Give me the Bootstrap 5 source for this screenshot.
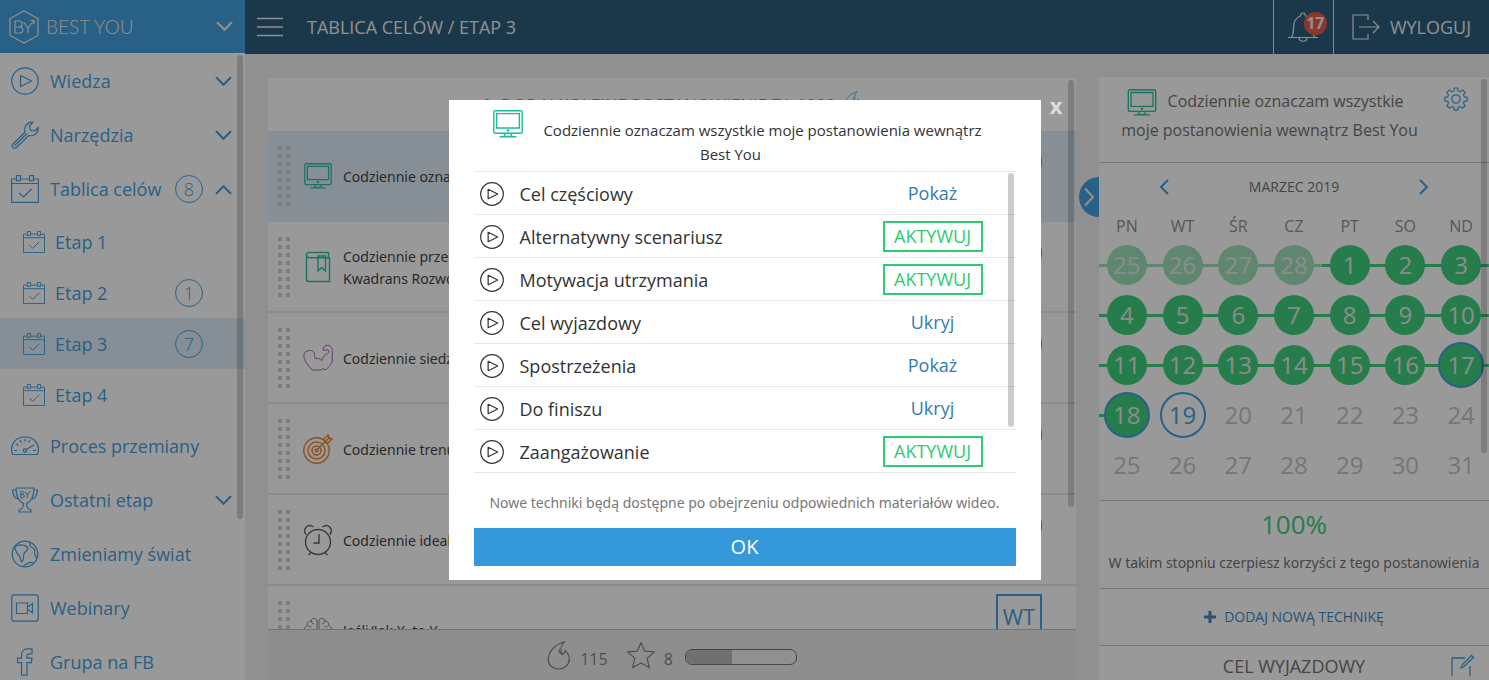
<!DOCTYPE html>
<html lang="pl">
<head>
<meta charset="utf-8">
<meta name="viewport" content="width=device-width, initial-scale=1">
<title>Best You – Tablica celów</title>
<link href="https://cdn.jsdelivr.net/npm/bootstrap@5.3.0/dist/css/bootstrap.min.css" rel="stylesheet">
<style>
:root{--by-blue:#3498db;--by-navy:#1b4f72;--by-green:#2ecc71;--by-sel:#dcedfa;--by-line:#c4c4c4}
body{font-family:"Open Sans","Noto Sans",sans-serif;font-size:14px;line-height:22px;color:#333;background:#eee}
svg{fill:none;stroke:currentColor;flex:none}
button{font-family:inherit}
.app{height:100vh}
.plain{background:none;border:0;padding:0;color:inherit}
.widetext{font-family:"Noto Sans","Open Sans",sans-serif}
.side{width:245px;background:#fff;color:var(--by-blue)}
.brandbar{height:54px;background:var(--by-blue);color:#eee;padding:0 12px 0 9px;gap:7px}
.brandname{font-family:Lato,sans-serif;font-weight:300;font-size:19px}
.menu{padding-top:1px}
.menu a{color:var(--by-blue);height:54px;padding:0 13px 0 11px;font-size:18px;gap:11px}
.menu .sub{margin-bottom:-1px}
.menu .sub a{height:51px;padding-left:23px;gap:10px}
.menu .sub .count{margin-right:2px}
.menu a.current{background:var(--by-sel)}
.count{width:28px;height:28px;border:1px solid;border-radius:50%;line-height:26px;text-align:center;font-weight:300;margin-right:1px}
.slot{width:17px}
.thumbbar{position:absolute;width:6px;border-radius:3px;background:rgba(0,0,0,.2);right:2px;top:2px}
.topbar{height:54px;background:var(--by-navy);color:#eee;font-size:18px}
.topbar .cell{border-left:1px solid #ddd}
.logout{padding:0 18px;gap:10px}
.bell{width:60px}
.redcount{position:absolute;left:30px;top:12px;width:23px;height:23px;border-radius:50%;background:#e74c3c;font-size:16px;line-height:23px;font-weight:700;text-align:center}
.board{margin:24px 23px 0 23px}
.goals{background:#fff}
.goals .addrow{height:53px;color:var(--by-blue);font-size:17px}
.goals .addrow>svg{margin-bottom:3px}
.goal{height:91px;border-bottom:2px solid #e6e6e6;padding:0 34px 0 10px}
.goal.current{background:var(--by-sel);border-color:var(--by-sel)}
.grip{width:12px;height:60px;background:repeating-linear-gradient(#fff0 0 4px,#fff 4px 8px),repeating-linear-gradient(90deg,#ccc 0 4px,#fff 4px 8px)}
.current .grip{background:repeating-linear-gradient(#fff0 0 4px,var(--by-sel) 4px 8px),repeating-linear-gradient(90deg,#ccc 0 4px,var(--by-sel) 4px 8px)}
.gicon{width:30px;margin:0 10px 0 13px}
.gname{padding-top:2px}
.dayball{width:46px;height:46px;margin-top:8px;border-radius:50%;background:var(--by-blue)}
.dayball.box{border-radius:0;background:none;border:2px solid var(--by-blue);color:var(--by-blue);font-size:22px;line-height:40px;text-align:center}
.stats{height:51px;border-top:1px solid #bbb;background:#ebebeb;color:#777;font-size:16px}
.stats span{padding-top:7px}
.stats .points{margin:0 18px 0 9px}
.stats .progress{width:112px;height:16px;margin:4px 0 0 12px;border:1px solid #666;border-radius:7px;background:#eee}
.stats .progress-bar{background:#b5b5b5}
.panel{width:390px;margin-top:23px;background:#fff;color:#666}
.panel section{border-bottom:1px solid var(--by-line)}
.drawer{position:absolute;left:-20px;top:100px;width:20px;height:40px;border-radius:20px 0 0 20px;background:var(--by-blue);color:#eee}
.ptitle{height:86px;font-size:16px;line-height:29px;padding:10px 21px 0 0}
.ptitle div{padding-right:4px}
.ptitle .screen{margin:0 6px 0 -8px}
.month{padding:13px 60px 0}
.cal{table-layout:fixed;width:100%;margin-bottom:10px;text-align:center}
.cal th{font-weight:400;font-size:16px;height:42px;padding-top:14px;color:#888}
.cal td{height:50px;padding:0;font-size:24px;line-height:40px;color:#c0c0c0}
.cal span{display:block;width:40px;height:40px;margin:auto;border-radius:50%}
.cal .done,.cal .old{background:linear-gradient(var(--by-green),var(--by-green)) center/100% 3px no-repeat}
.cal .old{background-image:linear-gradient(#96dfb4,#96dfb4)}
.cal .done span{background:var(--by-green);color:#e8e8e8}
.cal .old span{background:#96dfb4;color:#e8e8e8}
.cal .ring span{width:46px;height:46px;line-height:42px;border:2px solid var(--by-blue)}
.cal .last{background-position:left;background-size:50% 3px}
.cal .today{color:var(--by-blue)}
.score{padding:5px 0 14px}
.score p{margin:10px 0 0}
.pct{font-size:26px;line-height:36px;color:var(--by-green)}
.addtech{padding:17px 0 16px}
.tech{height:30px;overflow:hidden;font-size:18px;line-height:40px;padding:0 14px 0 38px}
.modal-backdrop{background:rgba(28,28,28,.45)}
.modal-dialog{max-width:592px;margin:100px auto 0}
.modal-content{border:0;border-radius:0;padding:0 25px 14px;color:#333}
.mtitle{font-size:15px;line-height:24px;padding:18px 28px 5px 0}
.mtitle svg{margin:-16px 20px 0 14px}
.tlist{border-top:1px solid #e8e8e8}
.tlist li{height:43px;border-bottom:1px solid #e8e8e8;font-size:18px;padding:2px 33px 0 6px}
.tlist a,.tlist button{width:100px;text-align:center;line-height:27px;margin-bottom:2px;color:#337ab7}
.tlist button{border:2px solid var(--by-green);background:#fff;color:var(--by-green);border-radius:0;padding:0}
.mnote{margin:19px 0 14px;color:#777}
.okbtn{background:var(--by-blue);color:#fff;border-radius:0;border:0;height:38px;font-size:20px;line-height:24px}
.xclose{position:absolute;right:-22px;top:-8px;font-size:22px;line-height:26px;font-weight:700;color:#ddd}
</style>
</head>
<body>
<svg class="d-none">
  <symbol id="down" viewBox="0 0 16 10"><path d="M1.500 1.500 8 8l6.500-6.500" stroke-width="2" stroke-linecap="round"/></symbol>
  <symbol id="cal" viewBox="0 0 28 28"><path d="M5.500 4H.6v23.400h26.800V4h-4.900M9.500 4h9M.6 8.500h26.800M8 18l4.500 4 8-8M5.500.6h4v5h-4zM18.500.6h4v5h-4z" stroke-width="1.200"/></symbol>
  <symbol id="play" viewBox="0 0 28 28"><circle cx="14" cy="14" r="13.200"/><path d="M9.500 8.500v11l11.200-5.500z" stroke-linejoin="round"/></symbol>
  <symbol id="mac" viewBox="0 0 30 28"><rect x=".8" y=".8" width="28.400" height="22.400" rx="1.500"/><path d="M3.600 3.600h22.800v14.400H3.600zM12 23.400l-.8 3h7.600l-.8-3M6.500 26.800h17" /><circle cx="15" cy="20.500" r=".6"/></symbol>
  <symbol id="flame" viewBox="0 0 24 29"><path d="M17 1C8 3 1.500 11 1.200 18c-.2 6 4.800 10 10.300 10 6 0 10.800-4 10.800-10 0-4-1.600-6.300-4.300-8.300 0 1.500-.8 2.800-2.500 3.800C13 9.500 13.500 4.500 17 1zM12.300 8c-.5 2.200.6 4.300 3.200 5.500"/></symbol>
</svg>

<div class="app d-flex overflow-hidden">
  <nav class="side flex-shrink-0 d-flex flex-column">
    <div class="brandbar d-flex align-items-center">
      <svg width="30" height="34" viewBox="0 0 30 34" stroke-width="1.200"><path d="M15 1l14 7.500v17L15 33 1 25.500v-17zM6 11v12h4.500c4.500 0 4.500-6 0-6H6m0-6h4c4 0 4 6 0 6M14.500 12l4.500 6m0 5v-5l6-7.500M21 10.500h4v4"/></svg>
      <span class="brandname me-auto">BEST YOU</span>
      <button class="plain d-flex" aria-label="Konto"><svg width="17" height="11"><use href="#down"/></svg></button>
    </div>
    <div class="menu position-relative flex-grow-1 overflow-hidden">
      <a href="#" class="d-flex align-items-center text-decoration-none"><svg width="28" height="28" stroke-width="1.200"><use href="#play"/></svg><span class="me-auto">Wiedza</span><svg width="17" height="11"><use href="#down"/></svg></a>
      <a href="#" class="d-flex align-items-center text-decoration-none"><svg width="28" height="28" viewBox="0 0 28 28" stroke-width="1.200" stroke-linejoin="round"><path d="M1.500 23.500 14 11.200C12.500 6 16 .8 22 1.200L18.500 5l.8 4.200 4.400.8 3.600-3.500c.5 5.500-4.300 9.200-9.500 8L5 26.800c-2 1.500-5-1-3.500-3.300zM3.500 24.700 16 12.500"/></svg><span class="me-auto">Narzędzia</span><svg width="17" height="11"><use href="#down"/></svg></a>
      <a href="#" class="d-flex align-items-center text-decoration-none"><svg width="28" height="28"><use href="#cal"/></svg><span class="me-auto">Tablica celów</span><span class="count">8</span><svg width="17" height="11" viewBox="0 0 16 10"><path d="M1.500 8.500 8 2l6.500 6.500" stroke-width="2" stroke-linecap="round"/></svg></a>
      <div class="sub">
        <a href="#" class="d-flex align-items-center text-decoration-none"><svg width="22" height="22"><use href="#cal"/></svg><span>Etap 1</span></a>
        <a href="#" class="d-flex align-items-center text-decoration-none"><svg width="22" height="22"><use href="#cal"/></svg><span class="me-auto">Etap 2</span><span class="count">1</span><span class="slot"></span></a>
        <a href="#" class="current d-flex align-items-center text-decoration-none"><svg width="22" height="22"><use href="#cal"/></svg><span class="me-auto">Etap 3</span><span class="count">7</span><span class="slot"></span></a>
        <a href="#" class="d-flex align-items-center text-decoration-none"><svg width="22" height="22"><use href="#cal"/></svg><span>Etap 4</span></a>
      </div>
      <a href="#" class="d-flex align-items-center text-decoration-none"><svg width="28" height="20" viewBox="0 0 28 20" stroke-width="1.200"><path d="M1.500 18.500C-2 8 5 1 14 1s16 7 12.500 17.500zM3 14.500h3M22 14.500h3M5 8l2.500 1.500M9 4l1.300 2.500M14 2.800v3M19 4l-1.300 2.500M15 13.700l8-5"/><circle cx="14" cy="14.500" r="1.600"/></svg><span>Proces przemiany</span></a>
      <a href="#" class="d-flex align-items-center text-decoration-none"><svg width="28" height="26" viewBox="0 0 28 26" stroke-width="1.200"><path d="M5 1h18c0 8-2 13-7.500 15.500 0 4 1 5.500 4.500 6.500v2H8v-2c3.500-1 4.500-2.500 4.500-6.500C7 14 5 9 5 1zM5.200 3H1.500c.3 5 2 8.500 6 9M22.800 3h3.700c-.3 5-2 8.500-6 9"/><path stroke-width="1" d="M9.800 4.500v6.500h1.700c2.300 0 2.300-3.500 0-3.500H9.800m0-3h1.500c2 0 2 3 0 3M14.300 5l2 3v3M16.300 8l3-4"/></svg><span class="me-auto">Ostatni etap</span><svg width="17" height="11"><use href="#down"/></svg></a>
      <a href="#" class="d-flex align-items-center text-decoration-none"><svg width="28" height="28" viewBox="0 0 28 28" stroke-width="1.200" stroke-linejoin="round"><circle cx="14" cy="14" r="12.800"/><path d="M3.500 7.500c1.500-2 4-2.800 7.500-2.500 2 1 6 .5 6 3.500-.5 2-3 3-4 5-.5 3-.5 6-2 8.500-2-1-2-4-2.500-6C6 14 5 11.500 3.500 7.500zM19.500 2.800c-1.500 1.200-.5 3.200 1 4.200 2.500 1.500 4 3 3 5 .2 2.500.5 4 2.300 6M12.500 26.500c1-3 3.500-2 5-3.500 1.500-1.200 3-.5 5 .3"/></svg><span>Zmieniamy świat</span></a>
      <a href="#" class="d-flex align-items-center text-decoration-none"><svg width="28" height="28" viewBox="0 0 28 28" stroke-width="1.200"><rect x=".8" y=".8" width="26.400" height="26.400" rx="2.500"/><path d="M5.500 9h11v10.500h-11zM16.500 12.500h1.500l3.500-3v9.500l-3.500-3h-1.500"/></svg><span>Webinary</span></a>
      <a href="#" class="d-flex align-items-center text-decoration-none"><svg width="28" height="28" viewBox="0 0 28 28" stroke-width="1.200"><path d="M21 .8v5h-3c-1.500 0-2 .6-2 2v2.400h5l-.6 4.500H16v12.500h-5.500V14.700H6.500v-4.500h4V7c0-4 2.500-6.200 6-6.200z"/></svg><span>Grupa na FB</span></a>
      <i class="thumbbar" style="height:74%"></i>
    </div>
  </nav>

  <div class="flex-grow-1 d-flex flex-column" style="min-width:0">
    <header class="topbar flex-shrink-0 d-flex align-items-stretch">
      <button class="plain d-flex align-items-center ms-2 ps-1" aria-label="Menu"><svg width="26" height="20" viewBox="0 0 26 20"><path d="M0 1.500h26M0 10h26M0 18.500h26" stroke-width="1.400"/></svg></button>
      <div class="align-self-center ms-4 me-auto">TABLICA CELÓW / ETAP 3</div>
      <button class="plain cell bell position-relative" aria-label="Powiadomienia">
        <svg width="30" height="30" viewBox="0 0 30 30" stroke-width="1.200"><path d="M0 25.500h30M3 25.500c2-2 2.500-4 2.500-9C5.500 9 8 5.500 12.500 4c0-4 5-4 5 0C22 5.500 24.500 9 24.500 16.500c0 5 .5 7 2.500 9M11 25.500c0 5 8 5 8 0"/></svg>
        <span class="redcount">17</span>
      </button>
      <a href="#" class="cell logout d-flex align-items-center text-reset text-decoration-none">
        <svg width="28" height="26" viewBox="0 0 28 26" stroke-width="1.200"><path d="M16 6V1H1v24h15v-5M7 13h20M21 7l6 6-6 6"/></svg><span>WYLOGUJ</span>
      </a>
    </header>

    <div class="d-flex flex-grow-1" style="min-height:0">
      <main class="board flex-grow-1 d-flex flex-column position-relative">
        <div class="goals flex-grow-1 overflow-hidden">
          <div class="addrow d-flex justify-content-center align-items-center gap-2"><a href="#" class="text-reset text-decoration-none d-flex align-items-center gap-2"><svg width="12" height="12" viewBox="0 0 12 12" stroke-width="3"><path d="M6 0v12M0 6h12"/></svg>DODAJ KOLEJNE POSTANOWIENIE ZA 1000</a><svg width="20" height="24"><use href="#flame"/></svg></div>
          <div class="goal current d-flex align-items-center"><span class="grip"></span><svg class="gicon" height="26" color="#1abc9c" stroke-width="1.400"><use href="#mac"/></svg><span class="gname widetext me-auto">Codziennie oznaczam</span><span class="dayball align-self-start"></span></div>
          <div class="goal d-flex align-items-center"><span class="grip"></span><svg class="gicon" height="32" viewBox="0 0 30 32" color="#1abc9c" stroke-width="1.400"><path d="M3.500 3.500C3.500 2 4.500 1.500 5.500 1.500h20v5M3.500 3.500V28c0 1.500 1 2.500 2.500 2.500h20.500V6.700H6.500c-2 0-3-1.200-3-3.200M15 5h7.500v15l-3.700-3.500-3.800 3.500z"/></svg><span class="gname widetext me-auto">Codziennie przeczytam<br>Kwadrans Rozwoju</span><span class="dayball align-self-start"></span></div>
          <div class="goal d-flex align-items-center"><span class="grip"></span><svg class="gicon" height="28" viewBox="0 0 30 28" color="#9b59b6" stroke-linejoin="round"><path d="M20.500 6.500c-.8-3 1-5 3.500-5.300 3 .3 4.500 1.500 5.300 4.300V17c-1 4-4.300 7-7.300 9l-2-1.500-2 1.500H9.500C5 22 1 16.500.8 12c0-3 1.700-4.500 4-5.200 3.700-1.300 6.200.7 6.700 3.200.3 2 0 3.500.5 4.500 3-.8 4.500.5 7 2 0-3.500 3-5.500 5.500-7 1.500-1 2-2.500.5-3.500-1.500-.5-3 .5-4.500.5"/></svg><span class="gname widetext me-auto">Codziennie siedzę</span><span class="dayball align-self-start"></span></div>
          <div class="goal d-flex align-items-center"><span class="grip"></span><svg class="gicon" height="30" viewBox="0 0 30 30" color="#e67e22" stroke-width="1.400"><circle cx="13.500" cy="16.500" r="12.700"/><circle cx="13.500" cy="16.500" r="8.500"/><circle cx="13.500" cy="16.500" r="4.500"/><circle cx="13.500" cy="16.500" r="1.300"/><path d="M14 16 27 3M21.500 8.500 21 5l4-4 .8 3.200L29 5l-4 4z"/></svg><span class="gname widetext me-auto">Codziennie trenuję</span><span class="dayball align-self-start"></span></div>
          <div class="goal d-flex align-items-center"><span class="grip"></span><svg class="gicon" height="32" viewBox="0 0 30 32" color="#555" stroke-width="1.400"><circle cx="15" cy="18" r="12.500"/><path d="M16 10v9h-5.500M8 28.500 5.500 31M22 28.500l2.500 2.500M3 10.500C-1 5 5-1 10.500 3M27 10.500C31 5 25-1 19.500 3"/></svg><span class="gname widetext me-auto">Codziennie idealnie</span><span class="dayball align-self-start"></span></div>
          <div class="goal d-flex align-items-center"><span class="grip"></span><svg class="gicon" height="28" viewBox="0 0 30 28" color="#777"><path d="M14 27V3c-2-3-6-1.500-5.500 1C5 4 4 6 4.500 8.500 1.500 9.500 1 12 2 14c-2 2-1 6 2 7 1 5 6 6 10 6zM16 27V3c2-3 6-1.500 5.500 1C25 4 26 6 25.500 8.500 28.500 9.500 29 12 28 14c2 2 1 6-2 7-1 5-6 6-10 6zM8.500 4c0 2 1 3 2.500 3M4.500 8.500c1 1.500 3 1.500 4 .5M2 14c2 0 4-1 4.500-2M21.500 4c0 2-1 3-2.500 3M25.500 8.500c-1 1.500-3 1.500-4 .5M28 14c-2 0-4-1-4.500-2"/></svg><span class="me-auto widetext">Jeśli/Jak X, to Y</span><span class="dayball box align-self-start">WT</span></div>
        </div>
        <i class="thumbbar" style="height:71%"></i>
        <div class="stats flex-shrink-0 d-flex align-items-center justify-content-center">
          <svg width="24" height="29" stroke-width="1.200"><use href="#flame"/></svg><span class="points">115</span>
          <svg width="30" height="28" viewBox="0 0 30 28" stroke-width="1.200" stroke-linejoin="round"><path d="M15 1.500l3.700 8.600 9.800.8-7.300 6.400 2.200 9.500L15 22l-8.400 4.800 2.200-9.500L1.500 10.900l9.800-.8z"/></svg><span class="ms-2">8</span>
          <div class="progress" role="progressbar" aria-label="Poziom" aria-valuenow="42" aria-valuemin="0" aria-valuemax="100"><div class="progress-bar" style="width:42%"></div></div>
        </div>
      </main>

      <aside class="panel flex-shrink-0 position-relative">
        <button class="plain drawer d-flex align-items-center justify-content-center" aria-label="Zwiń panel"><svg width="12" height="20" viewBox="0 0 12 20" stroke-width="2"><path d="M2 1.500 10 10l-8 8.500"/></svg></button>
        <section class="ptitle d-flex align-items-start">
          <div class="flex-grow-1 text-center"><svg class="screen" width="30" height="27" color="#1abc9c" stroke-width="1.400"><use href="#mac"/></svg> Codziennie oznaczam wszystkie<br>moje postanowienia wewnątrz Best You</div>
          <button class="plain d-flex" aria-label="Ustawienia"><svg width="24" height="24" viewBox="0 0 24 24" color="#3498db" stroke-width="1.200" stroke-linejoin="round"><path d="M10.200 1h3.600l.5 3 2 .8L18.800 3l2.400 2.400-1.700 2.500.8 2 2.900.4v3.500l-2.900.5-.8 2 1.700 2.500-2.400 2.400-2.500-1.700-2 .8-.5 2.800h-3.600l-.5-2.800-2-.8-2.500 1.700-2.400-2.400 1.700-2.500-.8-2-2.900-.5v-3.500l2.900-.4.8-2L2.800 5.400 5.200 3l2.500 1.800 2-.8z"/><circle cx="12" cy="12" r="4.200"/></svg></button>
        </section>
        <section>
          <div class="month d-flex justify-content-between align-items-center">
            <button class="plain d-flex" aria-label="Poprzedni miesiąc"><svg width="10" height="16" viewBox="0 0 10 16" color="#3498db" stroke-width="2"><path d="M9 1 2 8l7 7"/></svg></button>
            <span>MARZEC 2019</span>
            <button class="plain d-flex" aria-label="Następny miesiąc"><svg width="10" height="16" viewBox="0 0 10 16" color="#3498db" stroke-width="2"><path d="m1 1 7 7-7 7"/></svg></button>
          </div>
          <table class="cal">
            <thead><tr><th>PN</th><th>WT</th><th>ŚR</th><th>CZ</th><th>PT</th><th>SO</th><th>ND</th></tr></thead>
            <tbody>
              <tr><td class="old"><span>25</span></td><td class="old"><span>26</span></td><td class="old"><span>27</span></td><td class="old"><span>28</span></td><td class="done"><span>1</span></td><td class="done"><span>2</span></td><td class="done"><span>3</span></td></tr>
              <tr><td class="done"><span>4</span></td><td class="done"><span>5</span></td><td class="done"><span>6</span></td><td class="done"><span>7</span></td><td class="done"><span>8</span></td><td class="done"><span>9</span></td><td class="done"><span>10</span></td></tr>
              <tr><td class="done"><span>11</span></td><td class="done"><span>12</span></td><td class="done"><span>13</span></td><td class="done"><span>14</span></td><td class="done"><span>15</span></td><td class="done"><span>16</span></td><td class="done ring"><span>17</span></td></tr>
              <tr><td class="done ring last"><span>18</span></td><td class="ring today"><span>19</span></td><td>20</td><td>21</td><td>22</td><td>23</td><td>24</td></tr>
              <tr><td>25</td><td>26</td><td>27</td><td>28</td><td>29</td><td>30</td><td>31</td></tr>
            </tbody>
          </table>
        </section>
        <section class="score text-center">
          <div class="pct">100%</div>
          <p class="widetext text-nowrap">W takim stopniu czerpiesz korzyści z tego postanowienia</p>
        </section>
        <section class="addtech text-center">
          <a href="#" class="text-decoration-none d-inline-flex align-items-center gap-2" style="color:#337ab7"><svg width="12" height="12" viewBox="0 0 12 12" stroke-width="3"><path d="M6 0v12M0 6h12"/></svg>DODAJ NOWĄ TECHNIKĘ</a>
        </section>
        <div class="tech d-flex"><span class="flex-grow-1 text-center">CEL WYJAZDOWY</span><button class="plain d-flex align-items-start pt-2" aria-label="Edytuj"><svg width="24" height="24" viewBox="0 0 24 24" color="#3498db" stroke-width="1.300"><path d="M14 4H1v19h18V12M10 14l1.500-3.500L20.500 1.500l2 2L13 12.500z"/></svg></button></div>
        <i class="thumbbar" style="height:62%"></i>
      </aside>
    </div>
  </div>
</div>

<div class="modal-backdrop"></div>
<div class="modal d-block" role="dialog" aria-modal="true" aria-labelledby="mt">
  <div class="modal-dialog">
    <div class="modal-content">
      <button class="plain xclose" aria-label="Zamknij">x</button>
      <div class="mtitle text-center" id="mt"><svg width="30" height="28" color="#1abc9c" stroke-width="1.400"><use href="#mac"/></svg>Codziennie oznaczam wszystkie moje postanowienia wewnątrz Best You</div>
      <div class="position-relative">
        <ul class="tlist list-unstyled mb-0">
          <li class="d-flex align-items-center"><svg width="24" height="24" stroke-width="1.400"><use href="#play"/></svg><span class="ms-3 me-auto">Cel częściowy</span><a href="#" class="text-decoration-none">Pokaż</a></li>
          <li class="d-flex align-items-center"><svg width="24" height="24" stroke-width="1.400"><use href="#play"/></svg><span class="ms-3 me-auto">Alternatywny scenariusz</span><button>AKTYWUJ</button></li>
          <li class="d-flex align-items-center"><svg width="24" height="24" stroke-width="1.400"><use href="#play"/></svg><span class="ms-3 me-auto">Motywacja utrzymania</span><button>AKTYWUJ</button></li>
          <li class="d-flex align-items-center"><svg width="24" height="24" stroke-width="1.400"><use href="#play"/></svg><span class="ms-3 me-auto">Cel wyjazdowy</span><a href="#" class="text-decoration-none">Ukryj</a></li>
          <li class="d-flex align-items-center"><svg width="24" height="24" stroke-width="1.400"><use href="#play"/></svg><span class="ms-3 me-auto">Spostrzeżenia</span><a href="#" class="text-decoration-none">Pokaż</a></li>
          <li class="d-flex align-items-center"><svg width="24" height="24" stroke-width="1.400"><use href="#play"/></svg><span class="ms-3 me-auto">Do finiszu</span><a href="#" class="text-decoration-none">Ukryj</a></li>
          <li class="d-flex align-items-center"><svg width="24" height="24" stroke-width="1.400"><use href="#play"/></svg><span class="ms-3 me-auto">Zaangażowanie</span><button>AKTYWUJ</button></li>
        </ul>
        <i class="thumbbar" style="height:84%"></i>
      </div>
      <p class="mnote widetext text-center">Nowe techniki będą dostępne po obejrzeniu odpowiednich materiałów wideo.</p>
      <button class="btn okbtn">OK</button>
    </div>
  </div>
</div>
<script src="https://cdn.jsdelivr.net/npm/bootstrap@5.3.0/dist/js/bootstrap.bundle.min.js"></script>
</body>
</html>
